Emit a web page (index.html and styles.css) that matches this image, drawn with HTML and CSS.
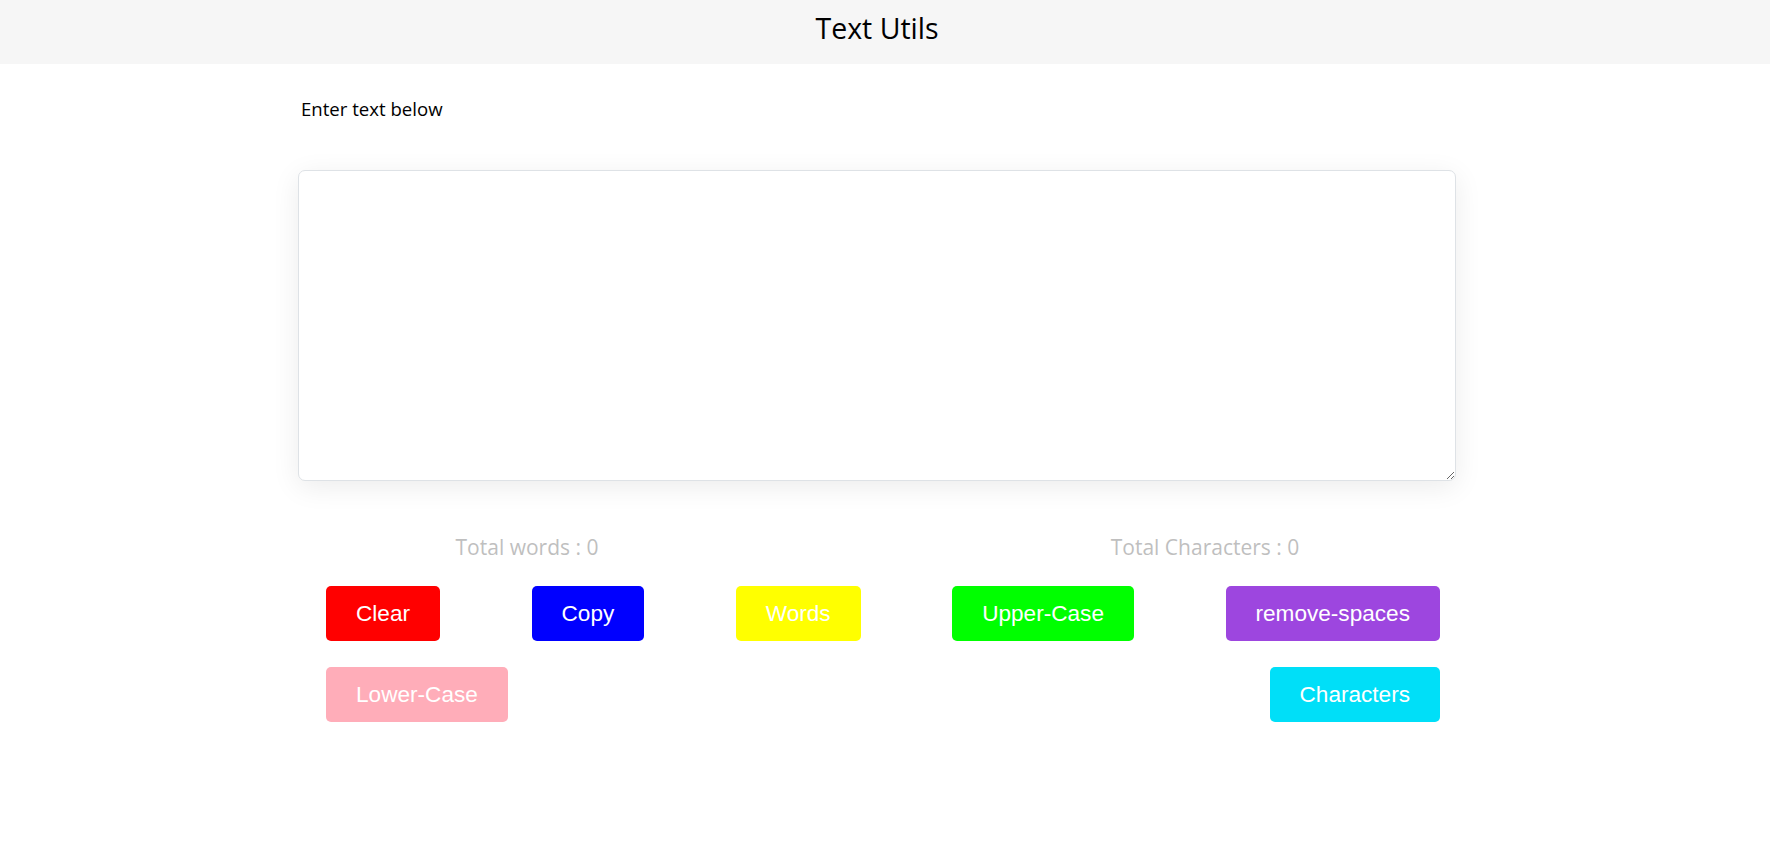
FILE: index.html
```html
<!DOCTYPE html>
<html lang="en">
<head>
<meta charset="utf-8">
<title>Text Utils</title>
<link rel="stylesheet" href="styles.css">
</head>
<body>
<header class="topbar">
  <h1 class="title">Text Utils</h1>
</header>
<main class="main">
  <label class="label" for="text">Enter text below</label>
  <textarea id="text" class="textbox"></textarea>
  <div class="stats">
    <span class="stat">Total words : 0</span>
    <span class="stat">Total Characters : 0</span>
  </div>
  <div class="buttons">
    <div class="row">
      <button class="btn red">Clear</button>
      <button class="btn blue">Copy</button>
      <button class="btn yellow">Words</button>
      <button class="btn green">Upper-Case</button>
      <button class="btn purple">remove-spaces</button>
    </div>
    <div class="row">
      <button class="btn pink">Lower-Case</button>
      <button class="btn cyan">Characters</button>
    </div>
  </div>
</main>
</body>
</html>
```

FILE: styles.css
```css
* { box-sizing: border-box; }
html, body { margin: 0; padding: 0; background: #ffffff; }
body { font-family: "Open Sans", "Noto Sans", sans-serif; color: #000; }

.topbar {
  height: 64px;
  background: #f6f6f6;
  display: flex;
  align-items: flex-start;
  justify-content: center;
  padding: 9px 16px 0 0;
}
.title {
  margin: 0;
  font-weight: 400;
  font-size: 28.5px;
  line-height: 38px;
  color: #000;
}

.main {
  width: 1158px;
  margin-left: 298px;
  display: flex;
  flex-direction: column;
}
.label {
  display: block;
  padding-left: 3px;
  margin-top: 33px;
  font-size: 18.6px;
  line-height: 24px;
}
.textbox {
  margin-top: 49px;
  width: 1158px;
  height: 311px;
  border: 1px solid #dee2e6;
  border-radius: 7px;
  box-shadow: 0 6px 28px rgba(0, 0, 0, 0.08);
  resize: both;
  outline: none;
  padding: 8px 12px;
  font-family: inherit;
  font-size: 16px;
}
.stats {
  margin-top: 52px;
  margin-left: -110px;
  display: grid;
  grid-template-columns: 678px 678px;
}
.stat {
  text-align: center;
  color: #bfbfbf;
  font-size: 21px;
  line-height: 28px;
}
.buttons {
  margin-top: 25px;
  padding: 0 16px 0 28px;
  display: flex;
  flex-direction: column;
  gap: 26px;
}
.row {
  display: flex;
  justify-content: space-between;
}
.btn {
  font-family: "Liberation Sans", Arial, sans-serif;
  font-size: 22.6px;
  line-height: 25px;
  padding: 15px 30px;
  color: #ffffff;
  border: none;
  border-radius: 5px;
  cursor: pointer;
}
.red { background: #ff0000; }
.blue { background: #0000ff; }
.yellow { background: #ffff00; }
.green { background: #00ff00; }
.purple { background: #9d46df; }
.pink { background: #ffadb9; }
.cyan { background: #00dff8; }
```
